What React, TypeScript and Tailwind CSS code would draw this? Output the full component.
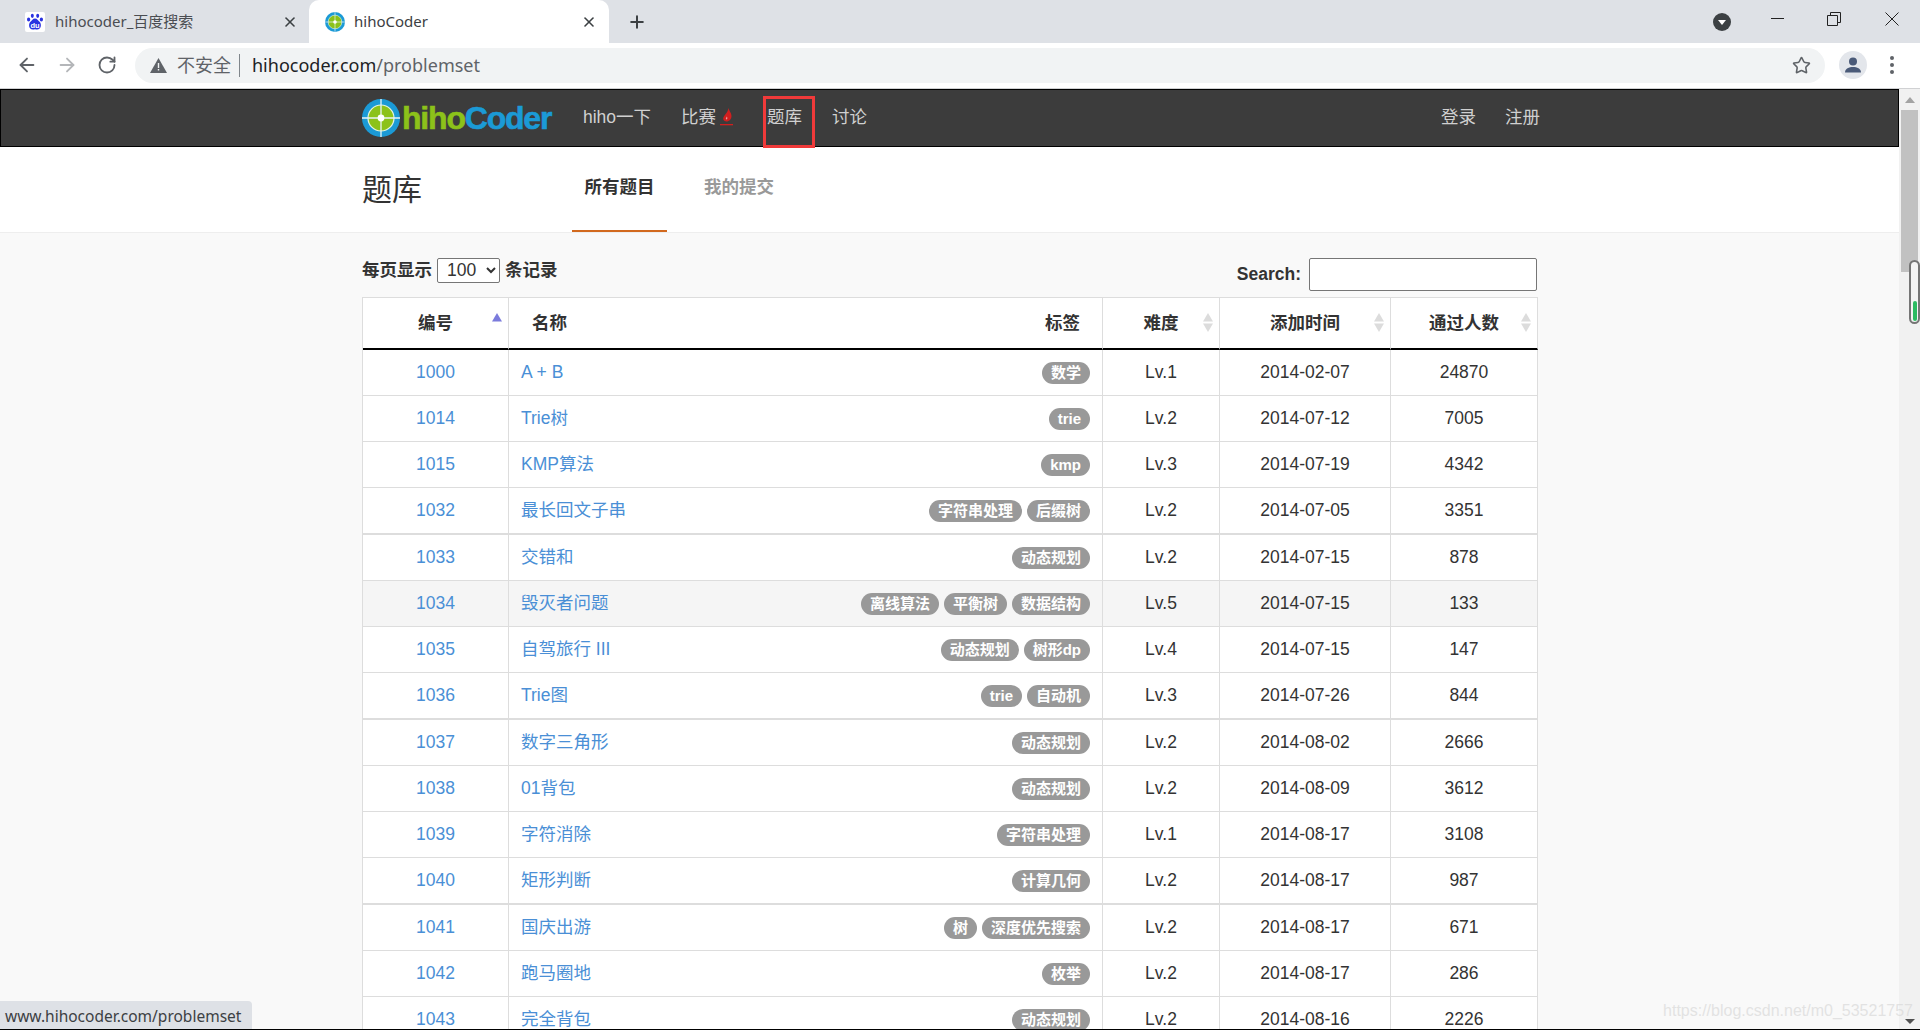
// App.tsx
import { ArrowLeft, ArrowRight, RotateCw, Star, X, Plus } from "lucide-react";

const rows = [
  { id: 1000, name: "A + B", tags: ["数学"], level: "Lv.1", date: "2014-02-07", passed: 24870 },
  { id: 1014, name: "Trie树", tags: ["trie"], level: "Lv.2", date: "2014-07-12", passed: 7005 },
  { id: 1015, name: "KMP算法", tags: ["kmp"], level: "Lv.3", date: "2014-07-19", passed: 4342 },
  { id: 1032, name: "最长回文子串", tags: ["字符串处理", "后缀树"], level: "Lv.2", date: "2014-07-05", passed: 3351 },
  { id: 1033, name: "交错和", tags: ["动态规划"], level: "Lv.2", date: "2014-07-15", passed: 878 },
  { id: 1034, name: "毁灭者问题", tags: ["离线算法", "平衡树", "数据结构"], level: "Lv.5", date: "2014-07-15", passed: 133 },
  { id: 1035, name: "自驾旅行 III", tags: ["动态规划", "树形dp"], level: "Lv.4", date: "2014-07-15", passed: 147 },
  { id: 1036, name: "Trie图", tags: ["trie", "自动机"], level: "Lv.3", date: "2014-07-26", passed: 844 },
  { id: 1037, name: "数字三角形", tags: ["动态规划"], level: "Lv.2", date: "2014-08-02", passed: 2666 },
  { id: 1038, name: "01背包", tags: ["动态规划"], level: "Lv.2", date: "2014-08-09", passed: 3612 },
  { id: 1039, name: "字符消除", tags: ["字符串处理"], level: "Lv.1", date: "2014-08-17", passed: 3108 },
  { id: 1040, name: "矩形判断", tags: ["计算几何"], level: "Lv.2", date: "2014-08-17", passed: 987 },
  { id: 1041, name: "国庆出游", tags: ["树", "深度优先搜索"], level: "Lv.2", date: "2014-08-17", passed: 671 },
  { id: 1042, name: "跑马圈地", tags: ["枚举"], level: "Lv.2", date: "2014-08-17", passed: 286 },
  { id: 1043, name: "完全背包", tags: ["动态规划"], level: "Lv.2", date: "2014-08-16", passed: 2226 },
];

const Globe = ({ size }: { size: number }) => (
  <svg width={size} height={size} viewBox="0 0 38 38" className="shrink-0">
    <circle cx="19" cy="19" r="19" fill="#1b9ad6" />
    <circle cx="19" cy="19" r="13" fill="#8cc21a" />
    <circle cx="19" cy="19" r="13" fill="none" stroke="#e6f3e0" strokeWidth="1.2" />
    <path d="M19 0v38M0 19h38" stroke="#e8f4f8" strokeWidth="1.3" />
    <circle cx="19" cy="19" r="3.4" fill="#fff" />
  </svg>
);

const BaiduIcon = () => (
  <svg width="20" height="20" viewBox="0 0 20 20" className="shrink-0">
    <rect width="20" height="20" rx="2" fill="#fff" />
    <g fill="#2932e1">
      <ellipse cx="7.300" cy="3.800" rx="1.500" ry="2.100" />
      <ellipse cx="12.700" cy="3.800" rx="1.500" ry="2.100" />
      <ellipse cx="3.600" cy="7.600" rx="1.600" ry="2" />
      <ellipse cx="16.400" cy="7.600" rx="1.600" ry="2" />
      <path d="M10 6.500c2.300 0 3 2 4.500 3.200 2.200 1.700 2.200 7.800-2.500 7.800-1 0-1.300-.3-2-.3s-1 .3-2 .3c-4.700 0-4.700-6.100-2.500-7.800C7 8.500 7.700 6.500 10 6.500z" />
    </g>
    <text x="10" y="15.600" textAnchor="middle" fontFamily="Liberation Sans" fontSize="7.500" fontWeight="700" fill="#fff">
      du
    </text>
  </svg>
);

const Flame = () => (
  <svg width="15" height="20" viewBox="0 0 15 20" className="ml-[3px] shrink-0">
    <path d="M9.500 1c.5 3 3 4.800 3 8 0 3-2.200 5.500-5 5.500-1.800 0-3-1-3.300-2.500-.5-3 4.800-6 5.300-11z" fill="#d01f1f" />
    <path d="M7.800 9.500c.5 1 .8 1.700.3 2.600-.3.500-1 .5-1.200 0-.2-.8.600-1.600.9-2.600z" fill="#e9a0a0" />
    <path d="M1 17h13v1.300H1z" fill="#d01f1f" />
  </svg>
);

// the grey up/down arrows next to a sortable header
const SortArrows = ({ active = false }: { active?: boolean }) => (
  <svg width="10" height="20" viewBox="0 0 10 20" className="absolute right-[6px] top-[15px]">
    <path d="M5 0l5 8.500H0z" fill={active ? "#7b7bdc" : "#dcdcdc"} />
    {!active && <path d="M5 19l5-8.500H0z" fill="#dcdcdc" />}
  </svg>
);

const Tag = ({ label }: { label: string }) => (
  <span className="h-[22px] rounded-[11px] bg-[#999999] px-[9px] text-[15px] font-bold leading-[22px] text-white whitespace-nowrap">
    {label}
  </span>
);

const BrowserChrome = () => (
  <div className="shrink-0 font-['Noto_Sans','Noto_Sans_CJK_SC',sans-serif]">
    {/* tab strip */}
    <div className="flex h-[43px] items-stretch bg-[#dee1e6]">
      <div className="flex w-[309px] items-center pl-[25px] pr-[11px] text-[15px] text-[#4a4d52]">
        <BaiduIcon />
        <span className="ml-[10px] flex-1">hihocoder_百度搜索</span>
        <X size={16} strokeWidth={2.4} className="text-[#3c4043]" />
      </div>
      <div className="flex w-[300px] items-center rounded-t-[10px] bg-white pl-[16px] pr-[12px] text-[15px] text-[#3c4043]">
        <Globe size={20} />
        <span className="ml-[9px] flex-1">hihoCoder</span>
        <X size={16} strokeWidth={2.4} className="text-[#3c4043]" />
      </div>
      <div className="flex w-[55px] items-center justify-center">
        <Plus size={20} strokeWidth={2.4} className="text-[#3c4043]" />
      </div>
      <div className="flex-1" />
      <div className="flex w-[28px] items-center justify-center">
        <svg width="18" height="18" viewBox="0 0 18 18">
          <circle cx="9" cy="9" r="9" fill="#3c4043" />
          <path d="M5 7h8l-4 5z" fill="#fff" />
        </svg>
      </div>
      <div className="ml-[21px] flex w-[163px] items-start pt-[12px] text-[#222]">
        <svg width="14" height="14" viewBox="0 0 14 14" className="ml-[14px]">
          <path d="M0 6.500h13" stroke="#222" strokeWidth="1" />
        </svg>
        <svg width="14" height="14" viewBox="0 0 14 14" className="ml-[42px]">
          <path d="M.5 3.500h10v10H.5zM3.500 3.500V.5h10v10h-3" fill="none" stroke="#222" strokeWidth="1" />
        </svg>
        <svg width="14" height="14" viewBox="0 0 14 14" className="ml-[44px]">
          <path d="M.5.5l13 13M13.500.5l-13 13" stroke="#222" strokeWidth="1" />
        </svg>
      </div>
    </div>
    {/* toolbar */}
    <div className="flex h-[46px] items-center border-b border-[#d0d1d3] bg-white pb-[1px] pr-[26px]">
      <div className="flex w-[135px] items-center pl-[16px] text-[#5f6368]">
        <ArrowLeft size={22} strokeWidth={2} />
        <ArrowRight size={22} strokeWidth={2} className="ml-[18px] text-[#b4b6b9]" />
        <RotateCw size={20} strokeWidth={2.2} className="ml-[19px]" />
      </div>
      <div className="flex h-[35px] flex-1 items-center rounded-[18px] bg-[#f1f3f4] pl-[15px] pr-[14px]">
        <svg width="17" height="15" viewBox="0 0 17 15" className="shrink-0">
          <path d="M8.500 0L17 15H0z" fill="#5f6368" />
          <path d="M7.800 5h1.400v5H7.800zM7.800 11h1.400v1.500H7.800z" fill="#f1f3f4" />
        </svg>
        <span className="ml-[10px] text-[18px] text-[#5f6368]">不安全</span>
        <span className="ml-[8px] h-[23px] w-px bg-[#80868b]" />
        <span className="ml-[12px] text-[18px] text-[#202124]">
          hihocoder.com<span className="text-[#5f6368]">/problemset</span>
        </span>
        <Star size={19} strokeWidth={2} className="ml-auto text-[#5f6368]" />
      </div>
      <div className="ml-[14px] flex h-[28px] w-[28px] items-center justify-center rounded-full bg-[#e3e6eb]">
        <svg width="18" height="16" viewBox="0 0 18 16">
          <circle cx="9" cy="4.500" r="4" fill="#4a5a78" />
          <path d="M1 15.500c0-4 4-5.500 8-5.500s8 1.500 8 5.500z" fill="#4a5a78" />
        </svg>
      </div>
      <div className="ml-[23px] flex flex-col gap-[3px]">
        <span className="h-[4px] w-[4px] rounded-full bg-[#5f6368]" />
        <span className="h-[4px] w-[4px] rounded-full bg-[#5f6368]" />
        <span className="h-[4px] w-[4px] rounded-full bg-[#5f6368]" />
      </div>
    </div>
  </div>
);

const NavBar = () => (
  <div className="flex h-[58px] items-center border border-black bg-[#3c3c3c] pb-[2px] pl-[361px] text-[17.5px] text-[#d0d0d0]">
    <div className="flex w-[190px] items-center pt-[2px]">
      <Globe size={38} />
      <span className="ml-[2px] text-[32px] font-bold leading-none tracking-[-1.2px] [-webkit-text-stroke:0.6px_currentColor]">
        <span className="text-[#8cc21a]">hiho</span>
        <span className="text-[#1b9ad6]">Coder</span>
      </span>
    </div>
    <a className="ml-[31px]">hiho一下</a>
    <a className="ml-[30px] flex items-center">
      比赛
      <Flame />
    </a>
    {/* red box is part of the screenshot */}
    <a className="relative ml-[33px]">
      题库
      <span className="absolute left-[-4px] top-[-8px] h-[52px] w-[52px] border-[3px] border-[#f03a3a]" />
    </a>
    <a className="ml-[30px]">讨论</a>
    <div className="ml-auto mr-[358px] flex gap-[29px]">
      <a>登录</a>
      <a>注册</a>
    </div>
  </div>
);

const ProblemTable = () => (
  <table className="w-[1176px] table-fixed border-separate border-spacing-0 border-l border-t border-[#dddddd] bg-white text-[17.5px] text-[#333333]">
    <colgroup>
      <col className="w-[146px]" />
      <col className="w-[594px]" />
      <col className="w-[117px]" />
      <col className="w-[171px]" />
      <col className="w-[147px]" />
    </colgroup>
    <thead>
      <tr className="h-[52px] font-bold">
        <th className="relative border-b-2 border-r border-b-black border-r-[#dddddd] font-bold">
          编号
          <SortArrows active />
        </th>
        <th className="border-b-2 border-r border-b-black border-r-[#dddddd] pl-[23px] pr-[22px] font-bold">
          <div className="flex justify-between">
            <span>名称</span>
            <span>标签</span>
          </div>
        </th>
        <th className="relative border-b-2 border-r border-b-black border-r-[#dddddd] font-bold">
          难度
          <SortArrows />
        </th>
        <th className="relative border-b-2 border-r border-b-black border-r-[#dddddd] font-bold">
          添加时间
          <SortArrows />
        </th>
        <th className="relative border-b-2 border-r border-b-black border-r-[#dddddd] font-bold">
          通过人数
          <SortArrows />
        </th>
      </tr>
    </thead>
    <tbody>
      {rows.map((r, i) => {
        const thick = i % 4 === 3;
        const cell = thick
          ? "border-r border-b-2 border-[#dddddd] text-center"
          : "border-r border-b border-[#dddddd] text-center";
        return (
          <tr key={r.id} className={`${thick ? "h-[47px]" : "h-[46px]"} ${r.id === 1034 ? "bg-[#f5f5f5]" : ""}`}>
            <td className={cell}>
              <a className="text-[#4a8fd6]">{r.id}</a>
            </td>
            <td className={cell}>
              <div className="flex items-center justify-between pl-[12px] pr-[12px]">
                <a className="text-[#4a8fd6]">{r.name}</a>
                <div className="flex gap-[5px]">
                  {r.tags.map((t) => (
                    <Tag key={t} label={t} />
                  ))}
                </div>
              </div>
            </td>
            <td className={cell}>{r.level}</td>
            <td className={cell}>{r.date}</td>
            <td className={cell}>{r.passed}</td>
          </tr>
        );
      })}
    </tbody>
  </table>
);

const Scrollbar = () => (
  <div className="relative flex w-[21px] shrink-0 flex-col items-center bg-[#f1f1f1]">
    <svg width="10" height="6" viewBox="0 0 10 6" className="mt-[8px]">
      <path d="M5 0l5 6H0z" fill="#a3a3a3" />
    </svg>
    <div className="mt-[7px] h-[162px] w-[17px] bg-[#c1c1c1]" />
    {/* little level meter sitting on top of the scrollbar */}
    <div className="absolute right-[0px] top-[171px] flex h-[64px] w-[11px] flex-col justify-end rounded-[6px] border-[2px] border-[#757575] bg-[#f4f4f4] px-[1.5px] pb-[1px]">
      <div className="h-[20px] rounded-[2px] bg-[#2cbb62]" />
    </div>
  </div>
);

export default function App() {
  return (
    <div className="relative flex h-[1030px] w-[1920px] flex-col overflow-hidden border-b border-black bg-white font-['Liberation_Sans','Noto_Sans_CJK_SC',sans-serif]">
      <BrowserChrome />
      <div className="flex min-h-0 flex-1">
        <div className="min-w-0 flex-1 overflow-hidden bg-[#f9f9f9]">
          <NavBar />
          {/* page header */}
          <div className="flex h-[86px] border-b border-[#eeeeee] bg-white pl-[362px]">
            <h1 className="w-[210px] pt-[23px] text-[30px] font-normal leading-[40px] text-[#333333]">题库</h1>
            <div className="relative flex w-[95px] justify-center pt-[28px] text-[17.5px] font-bold leading-[24px] text-[#333333]">
              所有题目
              <span className="absolute bottom-0 left-0 h-[2px] w-full bg-[#d2691e]" />
            </div>
            <div className="ml-[37px] pt-[28px] text-[17.5px] font-bold leading-[24px] text-[#999999]">我的提交</div>
          </div>
          {/* table area */}
          <div className="pl-[362px] pr-[362px]">
            <div className="flex h-[64px] w-[1175px] items-start justify-between">
              <div className="flex items-center pt-[24px] text-[17.5px] font-bold text-[#333333]">
                每页显示
                <select
                  defaultValue="100"
                  className="mx-[5px] h-[25px] w-[63px] rounded-[2px] border border-[#767676] bg-white pl-[5px] text-[17.5px] font-normal"
                >
                  <option value="100">100</option>
                </select>
                条记录
              </div>
              <div className="flex items-center pt-[25px] text-[17.5px] font-bold text-[#333333]">
                Search:
                <input className="ml-[8px] h-[33px] w-[228px] rounded-[2px] border border-[#767676] bg-white" />
              </div>
            </div>
            <ProblemTable />
          </div>
        </div>
        <Scrollbar />
      </div>
      {/* status bubble */}
      <div className="absolute bottom-0 left-0 h-[28px] w-[252px] rounded-tr-[4px] bg-[#dee1e6] pl-[5px] font-['Noto_Sans',sans-serif] text-[15.5px] leading-[30px] text-[#3c4043]">
        www.hihocoder.com/problemset
      </div>
      {/* blog watermark */}
      <div className="pointer-events-none absolute bottom-[6px] right-[7px] text-[16px] text-[#d8d8d8]/70">
        https://blog.csdn.net/m0_53521757
      </div>
      <svg width="10" height="5" viewBox="0 0 10 5" className="absolute bottom-[5px] right-[5px]">
        <path d="M0 0h10L5 5z" fill="#505050" />
      </svg>
    </div>
  );
}
